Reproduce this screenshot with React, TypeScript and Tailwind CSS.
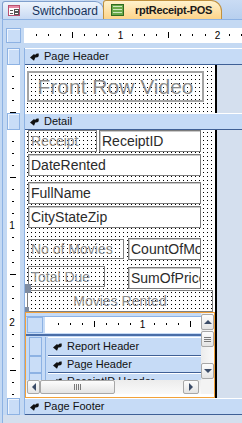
import React from "react";

const F = "font-['Liberation_Sans',Arial,sans-serif]";

function Dots() {
  return (
    <svg className="absolute inset-0" width="100%" height="100%" shapeRendering="crispEdges">
      <defs>
        <pattern id="dotgrid" width="4" height="4" patternUnits="userSpaceOnUse">
          <rect x="2" y="2" width="1" height="1" fill="#000" />
        </pattern>
      </defs>
      <rect width="100%" height="100%" fill="url(#dotgrid)" />
    </svg>
  );
}

function SecIcon() {
  return (
    <svg width="9" height="8" viewBox="0 0 9 8" className="shrink-0">
      <path d="M0 4.6 L4 0.9 L5 1.9 Q6.6 0 8.7 0.6 L8.7 3.3 Q7.6 4.7 5.3 4.5 L4 7.8 Z" fill="#111" />
    </svg>
  );
}

function SectionBar({ label }: { label: string }) {
  return (
    <div className="flex h-full items-center border-t border-t-white border-b border-b-[#3f6096] bg-[#c6dbf6] pl-[5px]">
      <SecIcon />
      <span className="ml-[5px] whitespace-nowrap text-[11px] leading-none text-[#111]">{label}</span>
    </div>
  );
}

function Selector() {
  return <div className="ml-[4px] h-full w-[13px] border border-[#8db2e3] bg-[#c9ddf7] shadow-[inset_1px_1px_0_#eef5fe]" />;
}

function HRuler({ w, origin, step, count, nums, longs }: { w: number; origin: number; step: number; count: number; nums: Record<number, string>; longs: number[] }) {
  const items = [];
  for (let k = 1; k <= count; k++) {
    const x = Math.round(origin + k * step);
    if (nums[k]) {
      items.push(
        <text key={k} x={x + 0.5} y={11} fontSize="10" textAnchor="middle" fill="#000" fontFamily="Liberation Sans, Arial, sans-serif">
          {nums[k]}
        </text>
      );
    } else if (longs.includes(k)) {
      items.push(<rect key={k} x={x} y={4} width={1} height={6} fill="#000" />);
    } else {
      items.push(<rect key={k} x={x} y={6} width={1} height={2} fill="#000" />);
    }
  }
  return (
    <svg width={w} height="15" shapeRendering="crispEdges" className="block">
      {items}
    </svg>
  );
}

function VRuler({ h, origin, step, count, nums, longs }: { h: number; origin: number; step: number; count: number; nums: Record<number, string>; longs: number[] }) {
  const items = [];
  for (let k = 1; k <= count; k++) {
    const y = Math.round(origin + k * step);
    if (nums[k]) {
      items.push(
        <text key={k} x={5} y={y + 4} fontSize="10" textAnchor="middle" fill="#000" fontFamily="Liberation Sans, Arial, sans-serif">
          {nums[k]}
        </text>
      );
    } else if (longs.includes(k)) {
      items.push(<rect key={k} x={3} y={y} width={6} height={1} fill="#000" />);
    } else {
      items.push(<rect key={k} x={5} y={y} width={2} height={1} fill="#000" />);
    }
  }
  return (
    <svg width="13" height={h} shapeRendering="crispEdges" className="block">
      {items}
    </svg>
  );
}

function FormIcon() {
  return (
    <svg width="12" height="11" viewBox="0 0 12 11" className="shrink-0" shapeRendering="crispEdges">
      <rect x="0.5" y="0.5" width="11" height="10" fill="#fff" stroke="#b9506f" />
      <rect x="1" y="1" width="10" height="2" fill="#e88aa6" />
      <rect x="2" y="5" width="3" height="1" fill="#555" />
      <rect x="6.5" y="4.5" width="3.5" height="2" fill="none" stroke="#555" />
      <rect x="2" y="8" width="3" height="1" fill="#555" />
      <rect x="6.5" y="7.5" width="3.5" height="1.5" fill="none" stroke="#555" />
    </svg>
  );
}

function ReportIcon() {
  return (
    <svg width="13" height="12" viewBox="0 0 13 12" className="shrink-0" shapeRendering="crispEdges">
      <rect x="0.5" y="0.5" width="12" height="11" fill="#6aa94a" stroke="#2f6a22" />
      <rect x="2" y="2" width="9" height="1" fill="#cfe8c0" />
      <rect x="2" y="5" width="9" height="1" fill="#cfe8c0" />
      <rect x="2" y="8" width="9" height="1" fill="#cfe8c0" />
    </svg>
  );
}

function Label({ text, cls, center }: { text: string; cls: string; center?: boolean }) {
  return (
    <div className={`absolute flex items-center border border-[#7f7f7f] text-[14px] leading-none text-[#8c8c8c] whitespace-nowrap overflow-hidden ${center ? "justify-center" : "pl-[2px]"} ${cls}`}>
      {text}
    </div>
  );
}

function TextBox({ text, cls }: { text: string; cls: string }) {
  return (
    <div className={`absolute flex items-center overflow-hidden whitespace-nowrap border border-[#7b7b7b] bg-white pl-[2px] text-[14px] leading-none text-[#2b2b2b] shadow-[inset_1px_1px_0_#c9c9c9] ${cls}`}>
      {text}
    </div>
  );
}

function Arrow({ dir }: { dir: "up" | "down" | "left" | "right" }) {
  const paths: Record<string, string> = {
    up: "M0 5 L4 1 L8 5 Z",
    down: "M0 1 L8 1 L4 5 Z",
    left: "M5 0 L5 8 L1 4 Z",
    right: "M1 0 L5 4 L1 8 Z",
  };
  const vertical = dir === "up" || dir === "down";
  return (
    <svg width={vertical ? 8 : 6} height={vertical ? 6 : 8} viewBox={vertical ? "0 0 8 6" : "0 0 6 8"}>
      <path d={paths[dir]} fill="#3b4c68" />
    </svg>
  );
}

function SBtn({ children, cls }: { children?: React.ReactNode; cls: string }) {
  return (
    <div className={`flex items-center justify-center rounded-[2px] border border-[#a7a7a7] bg-gradient-to-b from-[#fdfdfd] to-[#e4e4e4] ${cls}`}>
      {children}
    </div>
  );
}

function SubSection({ label, h }: { label: string; h: string }) {
  return (
    <div className={`flex shrink-0 ${h}`}>
      <div className="ml-[3px] h-full w-[13px] border border-[#8db2e3] bg-[#c9ddf7]" />
      <div className="ml-[3px] h-full w-[1px] bg-[#8db2e3]" />
      <div className="ml-[2px] flex-1">
        <SectionBar label={label} />
      </div>
    </div>
  );
}

function Subreport() {
  return (
    <div className="absolute left-0 top-[182px] flex h-[86px] w-[190px] flex-col border border-[#f2a23a] bg-white">
      <div className="flex h-[67px] shrink-0">
        <div className="flex w-[175px] flex-col overflow-hidden bg-[#c6dbf6]">
          <div className="h-[4px] shrink-0 border-b border-[#8db2e3]" />
          <div className="flex h-[16px] shrink-0">
            <div className="ml-[1px] h-full w-[16px] border border-[#8db2e3] bg-[#c9ddf7]" />
            <div className="ml-[2px] flex-1 overflow-hidden bg-white">
              <HRuler w={156} origin={1} step={12} count={12} nums={{ 8: "1" }} longs={[4, 12]} />
            </div>
          </div>
          <div className="mt-[1px] h-[2px] shrink-0 bg-[#4a6ea8]" />
          <div className="h-[1px] shrink-0" />
          <SubSection label="Report Header" h="h-[19px]" />
          <SubSection label="Page Header" h="h-[17px]" />
          <SubSection label="ReceiptID Header" h="h-[17px]" />
        </div>
        <div className="flex w-[13px] flex-col bg-gradient-to-r from-[#ececec] to-[#fafafa]">
          <SBtn cls="mt-[1px] h-[16px] w-full">
            <Arrow dir="up" />
          </SBtn>
          <SBtn cls="mt-[1px] h-[16px] w-full">
            <div className="flex flex-col gap-[1px]">
              <div className="h-[1px] w-[7px] bg-[#7a7a7a]" />
              <div className="h-[1px] w-[7px] bg-[#7a7a7a]" />
              <div className="h-[1px] w-[7px] bg-[#7a7a7a]" />
            </div>
          </SBtn>
          <div className="flex-1" />
          <SBtn cls="mb-[1px] h-[16px] w-full">
            <Arrow dir="down" />
          </SBtn>
        </div>
      </div>
      <div className="flex h-[14px] shrink-0">
        <div className="flex w-[175px] items-center bg-gradient-to-b from-[#ececec] to-[#fafafa]">
          <SBtn cls="ml-[1px] h-[14px] w-[13px]">
            <Arrow dir="left" />
          </SBtn>
          <SBtn cls="h-[14px] w-[75px]">
            <div className="flex gap-[1px]">
              <div className="h-[6px] w-[1px] bg-[#7a7a7a]" />
              <div className="h-[6px] w-[1px] bg-[#7a7a7a]" />
              <div className="h-[6px] w-[1px] bg-[#7a7a7a]" />
              <div className="h-[6px] w-[1px] bg-[#7a7a7a]" />
            </div>
          </SBtn>
          <div className="flex-1" />
          <SBtn cls="mr-[2px] h-[14px] w-[16px]">
            <Arrow dir="right" />
          </SBtn>
        </div>
        <div className="w-[13px] bg-[#f3f3f3]" />
      </div>
      <div className="flex-1 bg-white" />
    </div>
  );
}

function Row({ left, children, h }: { left: React.ReactNode; children: React.ReactNode; h: string }) {
  return (
    <div className={`flex shrink-0 ${h}`}>
      <div className="h-full w-[21px] shrink-0">{left}</div>
      <div className="h-full flex-1 border-l border-[#8db2e3]">{children}</div>
    </div>
  );
}

function Canvas({ children }: { children: React.ReactNode }) {
  return (
    <div className="flex h-full">
      <div className="relative h-full w-[190px] overflow-hidden bg-white">
        <Dots />
        {children}
      </div>
      <div className="h-full w-[2px] bg-black" />
      <div className="h-full flex-1 bg-[#d4dfee]" />
    </div>
  );
}

export default function App() {
  return (
    <div className={`relative h-[423px] w-[242px] overflow-hidden bg-[#c4d9f3] ${F}`}>
      {/* tab strip */}
      <div className="flex h-[19px] items-end bg-gradient-to-b from-[#cadcf4] to-[#b7cfee] pl-[2px]">
        <div className="flex h-[18px] w-[102px] items-center gap-[12px] rounded-tl-[3px] rounded-tr-[9px] border border-b-0 border-[#7f9fcc] bg-gradient-to-b from-[#eef4fc] to-[#c8daf3] pl-[5px]">
          <FormIcon />
          <span className="text-[12px] leading-none text-[#15325b]">Switchboard</span>
        </div>
        <div className="relative z-10 -ml-[1px] flex h-[19px] w-[119px] items-center gap-[11px] rounded-tl-[3px] rounded-tr-[11px] border border-b-0 border-[#c0913f] bg-gradient-to-b from-[#fff2cc] to-[#fdd489] pl-[7px]">
          <ReportIcon />
          <span className="text-[11px] font-bold leading-none tracking-[-0.3px] text-[#1a1a1a]">rptReceipt-POS</span>
        </div>
      </div>

      {/* main panel */}
      <div className="ml-[2px] flex h-[404px] flex-col border-l border-t border-[#8db2e3]">
        <div className="h-[8px] shrink-0" />
        {/* top ruler row */}
        <div className="flex h-[15px] shrink-0">
          <div className="ml-[3px] h-full w-[15px] border border-[#8db2e3] bg-[#c9ddf7] shadow-[inset_1px_1px_0_#eef5fe]" />
          <div className="ml-[3px] h-full flex-1 overflow-hidden bg-white">
            <HRuler w={218} origin={-0.5} step={12.07} count={18} nums={{ 8: "1", 16: "2" }} longs={[4, 12]} />
          </div>
        </div>
        <div className="h-[5px] shrink-0" />

        <Row h="h-[17px]" left={<Selector />}>
          <SectionBar label="Page Header" />
        </Row>

        <Row
          h="h-[48px]"
          left={
            <div className="ml-[4px] h-full w-[13px] bg-white">
              <VRuler h={48} origin={-1} step={12} count={4} nums={{}} longs={[4]} />
            </div>
          }
        >
          <Canvas>
            <div className="absolute left-[2px] top-[6px] flex h-[31px] w-[177px] items-center justify-center border-2 border-[#a3a3a3] text-[21px] leading-none text-[#8a8a8a]">
              Front Row Video
            </div>
          </Canvas>
        </Row>

        <Row h="h-[17px]" left={<Selector />}>
          <SectionBar label="Detail" />
        </Row>

        <Row
          h="h-[268px]"
          left={
            <div className="ml-[4px] h-full w-[13px] bg-white">
              <VRuler h={268} origin={-1} step={12.05} count={22} nums={{ 8: "1", 16: "2" }} longs={[4, 12, 20]} />
            </div>
          }
        >
          <Canvas>
            <Label text="Receipt" cls="left-[3px] top-[0px] h-[22px] w-[69px]" />
            <TextBox text="ReceiptID" cls="left-[74px] top-[0px] h-[22px] w-[102px]" />
            <TextBox text="DateRented" cls="left-[3px] top-[24px] h-[22px] w-[173px]" />
            <TextBox text="FullName" cls="left-[3px] top-[52px] h-[22px] w-[173px]" />
            <TextBox text="CityStateZip" cls="left-[3px] top-[76px] h-[22px] w-[173px]" />
            <Label text="No of Movies" cls="left-[3px] top-[109px] h-[20px] w-[96px]" />
            <TextBox text="CountOfMovies" cls="left-[103px] top-[108px] h-[22px] w-[73px]" />
            <Label text="Total Due" cls="left-[3px] top-[136px] h-[21px] w-[77px]" />
            <TextBox text="SumOfPrice" cls="left-[103px] top-[137px] h-[22px] w-[73px]" />
            <Label text="Movies Rented" center cls="left-[2px] top-[160px] h-[22px] w-[186px]" />
            <div className="absolute left-0 top-[154px] h-[9px] w-[6px] bg-[#7f8ca0]" />
            <div className="absolute left-0 top-[177px] h-[6px] w-[4px] bg-[#7f8ca0]" />
            <Subreport />
          </Canvas>
        </Row>

        <Row h="h-[17px]" left={<Selector />}>
          <SectionBar label="Page Footer" />
        </Row>
        <div className="flex-1 bg-[#d4dfee]" />
      </div>
    </div>
  );
}
